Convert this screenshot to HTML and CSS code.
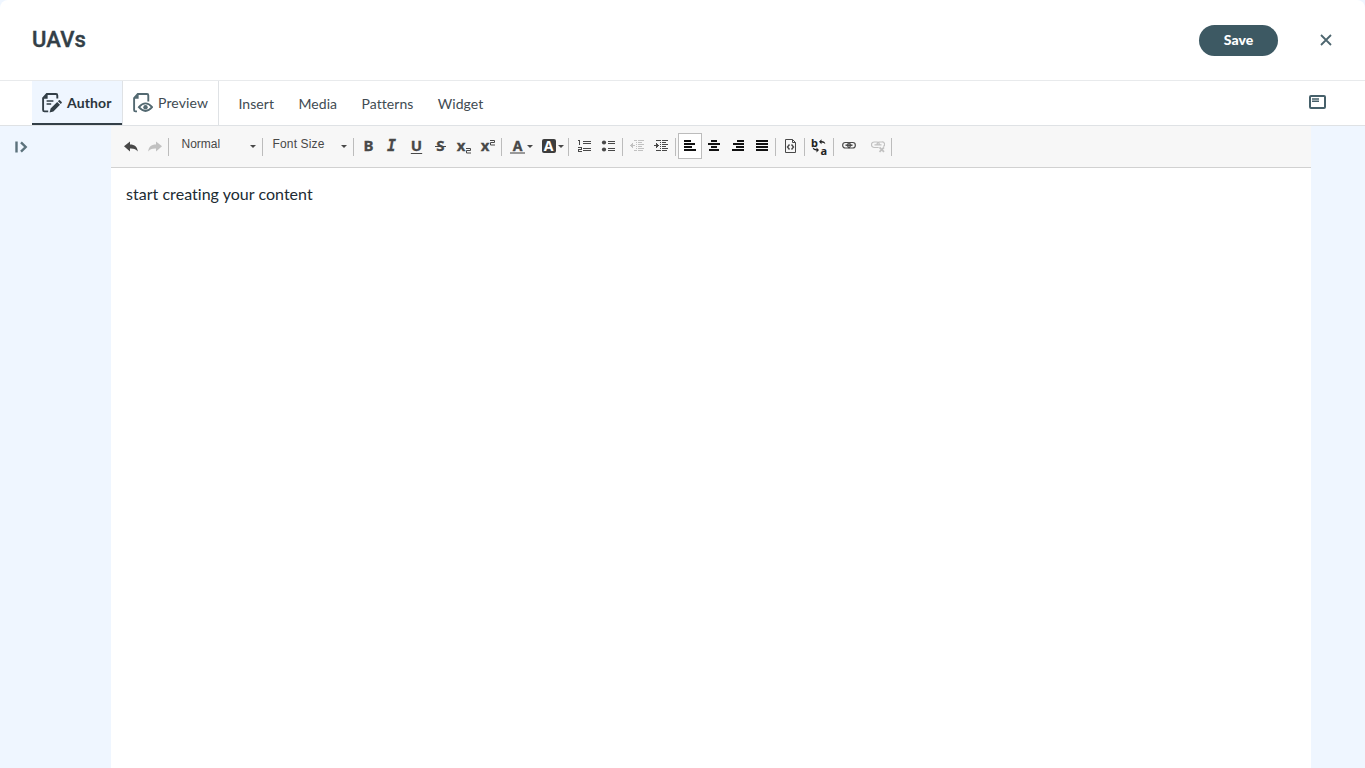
FILE: index.html
```html
<!DOCTYPE html>
<html lang="en">
<head>
<meta charset="utf-8">
<title>UAVs</title>
<link rel="stylesheet" href="styles.css">
</head>
<body>
<div class="app">
  <header class="header">
    <h1 class="title">UAVs</h1>
    <button class="save">Save</button>
    <button class="close" aria-label="Close"><svg width="12" height="12" viewBox="0 0 12 12"><path d="M1 1l10 10M11 1L1 11" stroke="#4d666f" stroke-width="1.8" fill="none"/></svg></button>
  </header>
  <nav class="nav">
    <a class="tab tab-active"><svg width="20" height="20" viewBox="0 0 20 20" fill="none" stroke="#333f47" stroke-width="1.9"><path d="M6.2 18.4H2.4Q1.1 18.4 1.1 17V5L4.8 1H14Q15.3 1 15.3 2.4V5.6"/><path d="M1 5.8L5.6 .8V5.8Z" fill="#333f47" stroke="none"/><path d="M4.6 8H11.4M4.6 11H9.2" stroke-width="1.4"/><path d="M7.6 19.4l1-3.8 6.6-6.6 2.8 2.8-6.6 6.6zM15.9 8.3l1-1q.5-.4 1 0l1.8 1.8q.4.5 0 1l-1 1z" fill="#333f47" stroke="none"/></svg><span>Author</span></a>
    <a class="tab"><svg width="20" height="20" viewBox="0 0 20 20" fill="none" stroke="#536971" stroke-width="1.9"><path d="M4 18.4H2.4Q1.1 18.4 1.1 17V5L4.8 1H14Q15.3 1 15.3 2.4V8.4"/><path d="M1 5.8L5.6 .8V5.8Z" fill="#536971" stroke="none"/><path d="M5.9 14.2Q12.5 6.6 19.1 14.2Q12.5 21.8 5.9 14.2Z"/><circle cx="12.5" cy="14.2" r="2.2" fill="#536971" stroke="none"/></svg><span>Preview</span></a>
    <div class="menus"><a>Insert</a><a>Media</a><a>Patterns</a><a>Widget</a></div>
    <svg class="panel-icon" width="17" height="14" viewBox="0 0 17 14"><rect x="1" y="1" width="15" height="12" rx="1" fill="none" stroke="#46606a" stroke-width="2"/><path d="M3 4H10M3 6.2H10" stroke="#46606a" stroke-width="1.5"/></svg>
  </nav>
  <main class="workspace">
    <aside class="side"><svg width="13" height="12" viewBox="0 0 13 12" fill="none" stroke="#5c727c" stroke-width="2.4"><path d="M1.5 .5V11.5M6 1.3L10.7 6 6 10.7"/></svg></aside>
    <section class="editor">
      <div class="toolbar">
        <div class="group g-history">
          <span class="btn"><svg width="14" height="12" viewBox="0 0 14 12"><path d="M0 6.3L6 1.5V4.5C10.8 4.5 13.4 6.8 13.8 11.6C12.2 9.4 10 8.3 6 8.5V11.5Z" fill="#484848"/></svg></span>
          <span class="btn disabled"><svg width="14" height="12" viewBox="0 0 14 12"><path d="M14 6.3L8 1.5V4.5C3.2 4.5 .6 6.8 .2 11.6C1.8 9.4 4 8.3 8 8.5V11.5Z" fill="#484848"/></svg></span>
        </div>
        <div class="group combo g-format"><span>Normal</span><i class="caret"></i></div>
        <div class="group combo g-size"><span>Font Size</span><i class="caret"></i></div>
        <div class="group g-style">
          <span class="btn letter">B</span>
          <span class="btn letter italic">I</span>
          <span class="btn letter under">U</span>
          <span class="btn letter"><span class="strike">S</span></span>
          <span class="btn script"><span>x</span><svg class="low" width="5" height="6" viewBox="0 0 5 6"><path d="M0 .5H4.5V2.5H.5V5H5" fill="none" stroke="#484848"/></svg></span>
          <span class="btn script"><span>x</span><svg class="high" width="5" height="6" viewBox="0 0 5 6"><path d="M0 .5H4.5V2.5H.5V5H5" fill="none" stroke="#484848"/></svg></span>
        </div>
        <div class="group g-color">
          <span class="btn color"><b class="fg">A</b><i class="caret"></i></span>
          <span class="btn color"><b class="bg">A</b><i class="caret"></i></span>
        </div>
        <div class="group g-list">
          <span class="btn"><svg width="14" height="14" viewBox="0 0 14 14" shape-rendering="crispEdges" fill="none" stroke="#484848"><path d="M6 2.5H14M6 4.5H14M6 9.5H14M6 11.5H14"/><path d="M1 1.5H2.5V6M1 8.5H4.5V10.5H1.5V12.5H5"/></svg></span>
          <span class="btn"><svg width="14" height="14" viewBox="0 0 14 14" fill="none" stroke="#484848"><path d="M7 2.5H14M7 4.5H14M7 9.5H14M7 11.5H14" shape-rendering="crispEdges"/><circle cx="3" cy="3.5" r="2.1" fill="#484848" stroke="none"/><circle cx="3" cy="10.5" r="2.1" fill="#484848" stroke="none"/></svg></span>
        </div>
        <div class="group g-indent">
          <span class="btn disabled"><svg width="14" height="14" viewBox="0 0 14 14" fill="none" stroke="#484848" shape-rendering="crispEdges"><path d="M6.5 1V13" stroke-dasharray="1 1"/><path d="M8 1.5H14M8 3.5H12M8 5.5H14M8 7.5H12M8 9.5H14M8 11.5H13M4 1.5H6M4 11.5H6M1 6.5H5"/><path d="M0 6.5L3 4V9Z" fill="#484848" stroke="none"/></svg></span>
          <span class="btn"><svg width="14" height="14" viewBox="0 0 14 14" fill="none" stroke="#484848" shape-rendering="crispEdges"><path d="M6.5 1V13" stroke-dasharray="1 1"/><path d="M8 1.5H14M8 3.5H12M8 5.5H14M8 7.5H12M8 9.5H14M8 11.5H13M2 1.5H6M2 11.5H6M0 6.5H4"/><path d="M5 6.5L2 4V9Z" fill="#484848" stroke="none"/></svg></span>
        </div>
        <div class="group g-align">
          <span class="btn on"><svg width="12" height="12" viewBox="0 0 12 12" shape-rendering="crispEdges" stroke="#111" stroke-width="2"><path d="M0 1H7M0 4H11M0 7H8M0 10H12"/></svg></span>
          <span class="btn"><svg width="12" height="12" viewBox="0 0 12 12" shape-rendering="crispEdges" stroke="#111" stroke-width="2"><path d="M3 1H9M0 4H12M3 7H9M1 10H11"/></svg></span>
          <span class="btn"><svg width="12" height="12" viewBox="0 0 12 12" shape-rendering="crispEdges" stroke="#111" stroke-width="2"><path d="M5 1H12M1 4H12M4 7H12M0 10H12"/></svg></span>
          <span class="btn"><svg width="12" height="12" viewBox="0 0 12 12" shape-rendering="crispEdges" stroke="#111" stroke-width="2"><path d="M0 1H12M0 4H12M0 7H12M0 10H12"/></svg></span>
        </div>
        <div class="group g-single">
          <span class="btn"><svg width="12" height="14" viewBox="0 0 12 14" fill="none" stroke="#484848"><path d="M1.5 .5H8.5L11.5 3.5V13.5H1.5ZM8.5 .5V3.5H11.5"/><path d="M5.5 5.5L3.5 8 5.5 10.5M7.5 5.5L9.5 8 7.5 10.5" stroke-width="1.4"/></svg></span>
        </div>
        <div class="group g-single">
          <span class="btn lang"><b class="lang-b">b</b><b class="lang-a">a</b><svg width="16" height="16" viewBox="0 0 16 16"><path d="M8 3.7L10.5 1.2V3Q14 3.2 14.3 6Q13 4.4 10.5 4.4V6.2ZM8 11.9L5.5 9.4V11.2Q3 11 1.6 9.6Q2 12.4 5.5 12.6V14.4Z" fill="#222"/></svg></span>
        </div>
        <div class="group g-link">
          <span class="btn"><svg width="14" height="14" viewBox="0 0 14 14" fill="none" stroke="#484848" stroke-width="1.2"><rect x=".7" y="3.5" width="7.6" height="5.5" rx="2.5"/><rect x="5.7" y="3.5" width="7.6" height="5.5" rx="2.5"/><path d="M3.5 6.2H10.5" stroke-width="1.5"/></svg></span>
          <span class="btn disabled"><svg width="14" height="14" viewBox="0 0 14 14" fill="none" stroke="#484848" stroke-width="1.2"><path d="M7.7 8.5H3.2A2.4 2.4 0 0 1 3.2 3H6Q8.3 3 8.3 5.8M6 6Q6 3 8.2 3H10.8A2.4 2.4 0 0 1 12.3 7.5M3.5 5.8H10.5"/><path d="M8.5 8.3L13 12.8M13 8.3L8.5 12.8" stroke-width="1.7"/></svg></span>
        </div>
      </div>
      <div class="content"><p>start creating your content</p></div>
    </section>
  </main>
</div>
</body>
</html>
```
FILE: styles.css
```css
* { box-sizing: border-box; }
body { margin: 0; background: #eff6ff; font-family: Lato, sans-serif; color: #333f47; overflow: hidden; }
.app { height: 768px; display: flex; flex-direction: column; background: #fff; border-radius: 8px 8px 0 0; overflow: hidden; }
.header { height: 81px; border-bottom: 1px solid #e8eaec; display: flex; align-items: center; padding: 0 32px; }
.title { margin: 0 auto 0 0; font: 500 22px/28px Roboto, sans-serif; letter-spacing: .15px; -webkit-text-stroke: .4px #333f47; }
.save { width: 79px; height: 31px; border: 0; border-radius: 16px; background: #3d5963; color: #fff; font: 900 14px/20px Lato, sans-serif; padding: 0; }
.close { border: 0; background: none; padding: 0; margin: 0 1px 0 42px; width: 12px; height: 12px; display: flex; }
.nav { height: 45px; border-bottom: 1px solid #dfe2e5; display: flex; padding: 0 39px 0 32px; font-size: 14px; letter-spacing: .06px; color: #414b52; }
.tab { display: flex; align-items: center; gap: 5px; padding: 0 10px; width: 96px; border-right: 1px solid #dfe2e5; }
.tab svg { flex: none; }
.tab span { margin-top: -1px; letter-spacing: .13px; }
.tab-active { width: 91px; background: linear-gradient(#333f47, #333f47) 0 100% / 90px 2px no-repeat #eff6ff; font-weight: 700; color: #2b353c; }
.menus { display: flex; align-items: center; gap: 24.4px; padding: 1px 0 0 19.5px; flex: 1; }
.panel-icon { margin-top: 14px; }
.workspace { flex: 1; display: flex; background: #eff6ff; }
.side { width: 111px; padding: 15px 0 0 15px; }
.side svg { display: block; }
.editor { width: 1200px; background: #fff; }
.toolbar { height: 42px; background: #f7f7f7; border-bottom: 1px solid #d1d1d1; padding: 7px 8px; display: flex; color: #484848; }
.group { height: 26px; display: flex; align-items: center; padding-left: 2px; background: linear-gradient(#bcbcbc, #bcbcbc) 100% 5px / 1px 18px no-repeat; }
.g-history { width: 50px; padding-left: 0; }
.g-format { width: 94px; padding: 0 7px 0 12.5px; }
.g-size { width: 91px; padding: 0 7px 0 9.5px; letter-spacing: .15px; }
.g-style { width: 148px; }
.g-color { width: 67px; padding-left: 4px; }
.g-list { width: 54px; padding-left: 3px; }
.g-indent { width: 53px; }
.g-align { width: 100px; }
.g-single { width: 29px; }
.g-link { width: 58px; gap: 5px; padding-left: 3px; }
.combo { justify-content: space-between; font-family: "Liberation Sans", Arial, sans-serif; font-size: 12px; line-height: 20px; }
.combo span { margin-top: -4px; }
.caret { width: 0; height: 0; border: 3px solid transparent; border-top-color: #484848; border-bottom: 0; margin-top: 1px; }
.btn { width: 24px; height: 26px; flex: none; display: flex; align-items: center; justify-content: center; }
.disabled { opacity: .3; }
.on { background: #fff; border: 1px solid #bcbcbc; }
.letter { font: 700 15px/16px "Noto Sans", sans-serif; padding: 0 0 2px 1px; -webkit-text-stroke: .3px #484848; }
.italic { font-family: "DejaVu Sans Mono", monospace; font-style: italic; padding: 0 1px 0 0; }
.under { text-decoration: underline; text-decoration-thickness: 1px; text-underline-offset: 2px; }
.strike { background: linear-gradient(#484848, #484848) 0 9px / 100% 1px no-repeat; padding: 0 1.5px; }
.script { font: 700 15px/14px "Noto Sans", sans-serif; padding-bottom: 2px; -webkit-text-stroke: .3px #484848; }
.low { margin: 12px 0 0 1px; }
.high { margin: -4px 0 0 1px; }
.color { width: 31px; gap: 2px; }
.color b { font: 700 14px/13px "Noto Sans", sans-serif; width: 15px; text-align: center; }
.color .fg { border-bottom: 2px solid #999; margin-top: 1px; -webkit-text-stroke: .3px #484848; }
.color .bg { background: #3d3d3d; color: #fff; border-radius: 2px; width: 14px; height: 14px; line-height: 14px; }
.lang { position: relative; color: #222; }
.lang b { position: absolute; font: 700 11px/11px "Noto Sans", sans-serif; }
.lang-b { left: 4px; top: 4px; }
.lang-a { right: 4px; bottom: 3px; }
.content { padding: 16px 15px; }
.content p { margin: 0; font-size: 16px; line-height: 20px; letter-spacing: .03px; font-variant-ligatures: none; color: #202b33; }
```
